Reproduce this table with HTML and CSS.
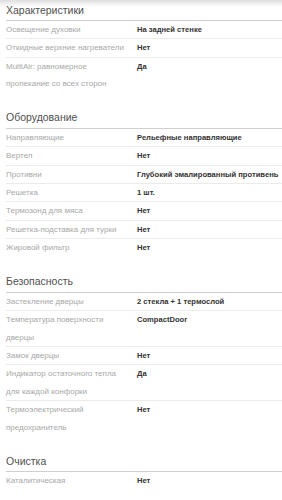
FILE: index.html
```html
<!DOCTYPE html>
<html lang="ru">
<head>
<meta charset="UTF-8" />
<title>Характеристики</title>
<link rel="stylesheet" href="styles.css">
</head>
<body>
<div class="top-shade"></div>

<div class="specs">
  <div class="section">
    <div class="section-title">Характеристики</div>
    <div class="row"><div class="label">Освещение духовки</div><div class="value">На задней стенке</div></div>
    <div class="row"><div class="label">Откидные верхние нагреватели</div><div class="value">Нет</div></div>
    <div class="row"><div class="label">MultiAir: равномерное пропекание со всех сторон</div><div class="value">Да</div></div>
  </div>

  <div class="section">
    <div class="section-title">Оборудование</div>
    <div class="row"><div class="label">Направляющие</div><div class="value">Рельефные направляющие</div></div>
    <div class="row"><div class="label">Вертел</div><div class="value">Нет</div></div>
    <div class="row"><div class="label">Противни</div><div class="value">Глубокий эмалированный противень</div></div>
    <div class="row"><div class="label">Решетка</div><div class="value">1 шт.</div></div>
    <div class="row"><div class="label">Термозонд для мяса</div><div class="value">Нет</div></div>
    <div class="row"><div class="label">Решетка-подставка для турки</div><div class="value">Нет</div></div>
    <div class="row"><div class="label">Жировой фильтр</div><div class="value">Нет</div></div>
  </div>

  <div class="section">
    <div class="section-title">Безопасность</div>
    <div class="row"><div class="label">Застекление дверцы</div><div class="value">2 стекла + 1 термослой</div></div>
    <div class="row"><div class="label">Температура поверхности дверцы</div><div class="value">CompactDoor</div></div>
    <div class="row"><div class="label">Замок дверцы</div><div class="value">Нет</div></div>
    <div class="row"><div class="label">Индикатор остаточного тепла для каждой конфорки</div><div class="value">Да</div></div>
    <div class="row"><div class="label">Термоэлектрический предохранитель</div><div class="value">Нет</div></div>
  </div>

  <div class="section">
    <div class="section-title">Очистка</div>
    <div class="row"><div class="label">Каталитическая</div><div class="value">Нет</div></div>
  </div>
</div>
</body>
</html>
```

FILE: styles.css
```css
body {
  margin: 0;
  font-family: "Liberation Sans", Arial, sans-serif;
  background-color: #fff;
  color: #333;
}
.top-shade {
  position: fixed;
  top: 0;
  left: 0;
  right: 0;
  height: 7px;
  background: linear-gradient(rgba(0, 0, 0, 0.13), rgba(0, 0, 0, 0));
}
.specs {
  padding: 2.5px 0 0 6px;
}
.section {
  margin-bottom: 17.7px;
}
.section-title {
  font-size: 10.5px;
  line-height: 14px;
  color: #505050;
  padding-bottom: 3.5px;
  border-bottom: 1px solid #d0d0d0;
}
.row {
  display: grid;
  grid-template-columns: 131px 1fr;
  font-size: 8px;
  line-height: 17.4px;
  border-bottom: 1px solid #ebebeb;
}
.row:last-child {
  border-bottom: none;
}
.label {
  color: #a8a8a8;
  padding-right: 12px;
}
.value {
  color: #333;
  font-size: 7.6px;
  font-weight: bold;
  white-space: nowrap;
}
```
